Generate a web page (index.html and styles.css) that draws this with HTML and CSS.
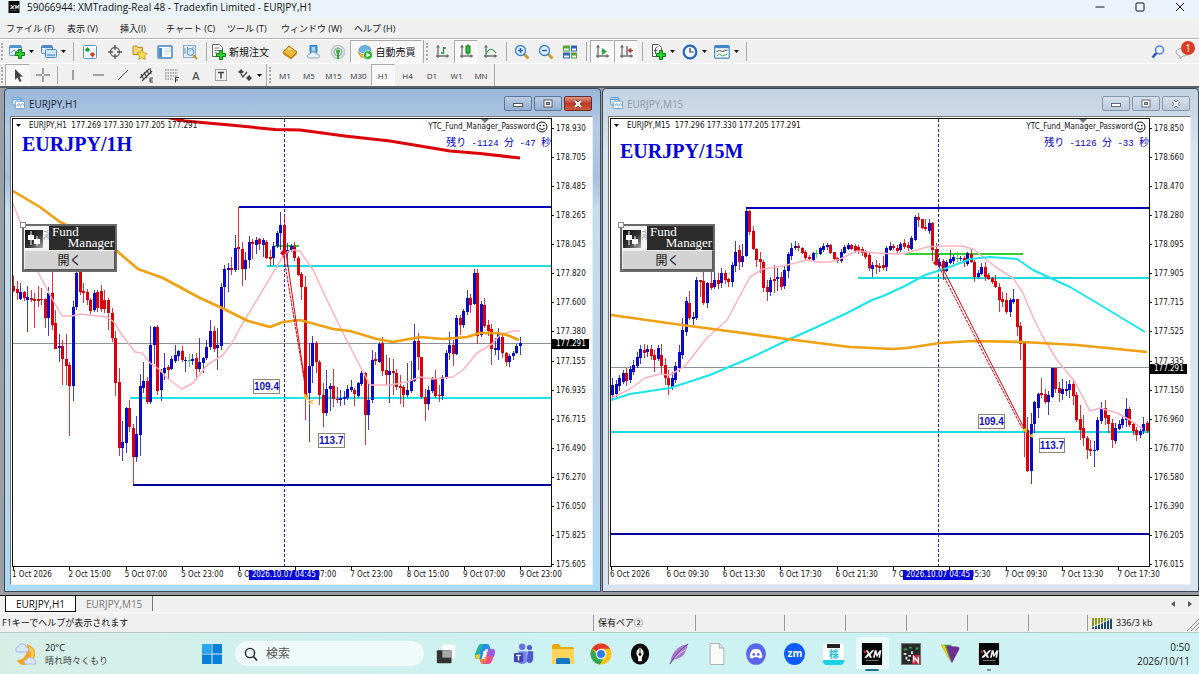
FILE: index.html
```html
<!DOCTYPE html>
<html lang="ja">
<head>
<meta charset="utf-8">
<title>59066944: XMTrading-Real 48 - Tradexfin Limited - EURJPY,H1</title>
<link rel="stylesheet" href="styles.css">
</head>
<body>
<svg class="defs" aria-hidden="true">
  <symbol id="caret" viewBox="0 0 5 3"><path d="M0 0h5L2.500 3z" fill="#111"/></symbol>
  <symbol id="axes" viewBox="0 0 16 16"><path d="M4 2v12M2 12h12" stroke="#6b706b" stroke-width="1.300" fill="none"/><path d="M4 0.500l-2 3h4zM15.500 12l-3-2v4z" fill="#6b706b"/></symbol>
  <symbol id="plus" viewBox="0 0 10 10"><path d="M3.500 .500h3v3h3v3h-3v3h-3v-3h-3v-3h3z" fill="#2fd02f" stroke="#0a7d12"/></symbol>
  <symbol id="chartwin" viewBox="0 0 14 14"><rect x=".5" y=".5" width="9" height="8" rx="1" fill="#e3f0fb" stroke="#5d9bd3"/><path d="M.5 2.500h9" stroke="#5d9bd3" stroke-width="1.500"/><rect x="3.500" y="4.500" width="10" height="8" rx="1" fill="#fff" stroke="#5d9bd3"/><path d="M5 10l2-3 2 3 2-3 2 2" stroke="#5d9bd3" fill="none"/></symbol>
  <symbol id="xm" viewBox="0 0 22 24"><rect width="22" height="24" fill="#050505"/><path d="M4 8l2.500 0 1.500 3 3-3h2.500l-4 4.500 1.500 3.500h-2.500l-1-2-2 2h-3l4-4.500z" fill="#eee"/><path d="M2 7l3 4-3 0z" fill="#d22"/><path d="M12 16l2-8h2l.8 4 2.500-4h2l-1.500 8h-1.800l.8-4-2 3h-1l-1-3-.8 4z" fill="#eee"/><path d="M4 19h14" stroke="#888"/></symbol>
  <symbol id="smile" viewBox="0 0 12 12"><circle cx="6" cy="6" r="5" fill="none" stroke="#111"/><circle cx="4.200" cy="4.600" r=".8"/><circle cx="7.800" cy="4.600" r=".8"/><path d="M3.200 7.200q2.800 3 5.600 0" fill="none" stroke="#111"/></symbol>
  <symbol id="candles" viewBox="0 0 18 18"><defs><linearGradient id="cg" x2="1" y2="1"><stop stop-color="#111"/><stop offset=".55" stop-color="#333"/><stop offset="1" stop-color="#aaa"/></linearGradient></defs><rect width="18" height="18" fill="url(#cg)"/><path d="M6 1v14M12 6v10" stroke="#fff"/><path d="M3 5h6v5h-6zM9 9h6v5h-6z" fill="#fff"/></symbol>
</svg>

<header class="titlebar">
  <svg class="app-icon"><use href="#xm"/></svg>
  <h1 class="app-title">59066944: XMTrading-Real 48 - Tradexfin Limited - EURJPY,H1</h1>
  <div class="win-controls">
    <button aria-label="最小化"><svg viewBox="0 0 10 10"><path d="M.5 5h9" stroke="#111"/></svg></button>
    <button aria-label="最大化"><svg viewBox="0 0 10 10"><rect x="1" y="1" width="8" height="8" rx="1" fill="none" stroke="#111"/></svg></button>
    <button aria-label="閉じる"><svg viewBox="0 0 10 10"><path d="M1 1l8 8M9 1l-8 8" stroke="#111"/></svg></button>
  </div>
</header>

<nav class="menubar">
  <button class="m-file">ファイル (F)</button><button class="m-view">表示 (V)</button><button class="m-insert">挿入(I)</button><button class="m-chart">チャート (C)</button><button class="m-tool">ツール (T)</button><button class="m-window">ウィンドウ (W)</button><button>ヘルプ (H)</button>
</nav>

<div class="toolbar main-tools">
  <span class="grip"></span>
  <button class="tool drop" aria-label="新規チャート"><svg class="ico" viewBox="0 0 16 16"><rect x=".5" y="1.500" width="12" height="10" rx="1" fill="#e6f2fc" stroke="#4f93cf"/><path d="M1 3h11" stroke="#4f93cf" stroke-width="2"/><path d="M2 9l3-3 2 2 3-3" stroke="#5d9bd3" fill="none"/><use href="#plus" x="6" y="5" width="10" height="10"/></svg><svg class="caret"><use href="#caret"/></svg></button>
  <button class="tool drop" aria-label="組表示"><svg class="ico" viewBox="0 0 16 16"><rect x=".5" y="1.500" width="11" height="8" rx="1" fill="#dcebf8" stroke="#4f86bf"/><path d="M1 3h10" stroke="#4f86bf" stroke-width="2"/><rect x="4.500" y="5.500" width="11" height="8" rx="1" fill="#cfe3f6" stroke="#4f86bf"/><path d="M6 11h8" stroke="#7fb0dd" stroke-width="2"/></svg><svg class="caret"><use href="#caret"/></svg></button>
  <span class="sep"></span>
  <button class="tool" aria-label="気配値"><svg class="ico" viewBox="0 0 16 16"><rect x="1.500" y="1.500" width="13" height="13" rx="1" fill="#f4faff" stroke="#5793cb"/><path d="M5.500 3l3 3.500h-1.500v1h-3v-1h-1.500z" fill="#1d9a2d"/><path d="M10.500 13.500l-3-3.500h1.500v-1.500h3v1.500h1.500z" fill="#e03c1c"/></svg></button>
  <button class="tool" aria-label="データウィンドウ"><svg class="ico" viewBox="0 0 16 16"><circle cx="8" cy="8" r="4.500" fill="none" stroke="#666" stroke-width="1.300"/><path d="M8 1v5M8 10v5M1 8h5M10 8h5" stroke="#555" stroke-width="1.300"/></svg></button>
  <button class="tool" aria-label="ナビゲーター"><svg class="ico" viewBox="0 0 16 16"><path d="M1 3q0-1 1-1h3l1 1.500h4.500v7h-9.500z" fill="#f7d675" stroke="#b98b1d"/><path d="M10 5.500l1.600 3.300 3.600.5-2.600 2.500.6 3.600-3.200-1.700-3.200 1.700.6-3.600-2.600-2.500 3.600-.5z" fill="#ffe14a" stroke="#b98b1d" stroke-width=".8"/></svg></button>
  <button class="tool" aria-label="ターミナル"><svg class="ico" viewBox="0 0 16 16"><rect x="1" y="2" width="14" height="12" rx="1" fill="#fff" stroke="#3e7ec4" stroke-width="1.400"/><path d="M2 4h3v9h-3z" fill="#4a88cb"/><path d="M7 5h7M7 7.500h7M7 10h5" stroke="#b9d4ee"/></svg></button>
  <button class="tool" aria-label="ストラテジーテスター"><svg class="ico" viewBox="0 0 16 16"><rect x="1.500" y="1.500" width="12" height="12" fill="#e4eef8" stroke="#8aa9c8"/><path d="M3 4v6M5.500 3v6M8 4v4M11 3v5" stroke="#678db3"/><circle cx="8.500" cy="8" r="3.500" fill="#cfe4f7aa" stroke="#6397c8"/><path d="M11 11l4 4" stroke="#c99a2b" stroke-width="2"/></svg></button>
  <span class="sep"></span>
  <button class="tool wide"><svg class="ico" viewBox="0 0 16 16"><path d="M2.500.5h7l3 3v9h-10z" fill="#fff" stroke="#666"/><path d="M4.500 4h5M4.500 6.500h6M4.500 9h3" stroke="#777"/><use href="#plus" x="6" y="6" width="10" height="10"/></svg><span>新規注文</span></button>
  <button class="tool snug" aria-label="メタエディター"><svg class="ico" viewBox="0 0 16 16"><path d="M1 8l6-6 8 6-6 6z" fill="#f0b83a" stroke="#a9700f"/><path d="M1 8v2l8 5.500 6-5.500v-2l-6 6z" fill="#c98716"/><path d="M5 6l2.500-2.500 3 2" fill="#ffe39a"/></svg></button>
  <button class="tool snug" aria-label="VPS"><svg class="ico" viewBox="0 0 16 16"><path d="M4 1.500h7v7h-7z" fill="#56a7e8" stroke="#2d78bd"/><path d="M6 4h3M6 6h3" stroke="#fff"/><path d="M3 14q-2.500-.5-1.500-3 1-1.500 2.500-1 1-2.500 4-2 2.500.5 2.500 2 3 0 3 2 0 2-2 2z" fill="#e8f3fc" stroke="#7fa8cd"/></svg></button>
  <button class="tool snug" aria-label="シグナル"><svg class="ico" viewBox="0 0 16 16"><circle cx="8" cy="8" r="6.500" fill="none" stroke="#b9c9c9" stroke-width="1.500"/><circle cx="8" cy="8" r="3.800" fill="none" stroke="#8db8a4" stroke-width="1.600"/><circle cx="8" cy="7.500" r="2" fill="#39a53e"/><path d="M8 8v7" stroke="#39a53e" stroke-width="2"/></svg></button>
  <button class="tool auto pressed"><svg class="ico" viewBox="0 0 16 16"><path d="M1 8q7 6 14 0l-3 5q-4 2-8 0z" fill="#f0c02c" stroke="#b48310" stroke-width=".7"/><path d="M2 7q0-5 6-5.500 6 .5 6 5.500-6 4-12 0z" fill="#67b5e8" stroke="#327fb8" stroke-width=".7"/><circle cx="11" cy="11" r="4.500" fill="#2fae34" stroke="#fff" stroke-width=".6"/><path d="M9.500 8.500l4 2.500-4 2.500z" fill="#fff"/></svg><span>自動売買</span></button>
  <span class="sep tight"></span><span class="grip"></span>
  <button class="tool snug" aria-label="バーチャート"><svg class="ico" viewBox="0 0 16 16"><use href="#axes"/><path d="M9.500 3v7M9.500 4h2.500M7 9h2.500" stroke="#2d8c3c" stroke-width="1.300"/></svg></button>
  <button class="tool snug pressed" aria-label="ローソク足"><svg class="ico" viewBox="0 0 16 16"><use href="#axes"/><path d="M10 0v11" stroke="#0e7a1b"/><rect x="8" y="2" width="4" height="7" fill="#2fbf3a" stroke="#0e7a1b"/></svg></button>
  <button class="tool snug" aria-label="ラインチャート"><svg class="ico" viewBox="0 0 16 16"><use href="#axes"/><path d="M4 10q4-9 10-1" fill="none" stroke="#3c9b4a" stroke-width="1.200"/></svg></button>
  <span class="sep"></span>
  <button class="tool snug" aria-label="ズームイン"><svg class="ico" viewBox="0 0 16 16"><path d="M9.500 9.500l5 5" stroke="#c9a02b" stroke-width="3"/><circle cx="6.500" cy="6.500" r="5" fill="#dff0fd" stroke="#3b7fd1" stroke-width="1.300"/><path d="M6.500 4v5M4 6.500h5" stroke="#1f63bb" stroke-width="1.500"/></svg></button>
  <button class="tool snug" aria-label="ズームアウト"><svg class="ico" viewBox="0 0 16 16"><path d="M9.500 9.500l5 5" stroke="#c9a02b" stroke-width="3"/><circle cx="6.500" cy="6.500" r="5" fill="#dff0fd" stroke="#3b7fd1" stroke-width="1.300"/><path d="M4 6.500h5" stroke="#1f63bb" stroke-width="1.500"/></svg></button>
  <button class="tool snug" aria-label="整列"><svg class="ico" viewBox="0 0 16 16"><path d="M1 1.500h7v6h-7zM9 8.500h6v6h-6z" fill="#54a62a"/><path d="M9 1.500h6v6h-6zM1 8.500h7v6h-7z" fill="#2f65b5"/><path d="M2 4.500h5v2h-5zM10 4.500h4v2h-4zM2 11.500h5v2h-5zM10 11.500h4v2h-4z" fill="#eaf4ff"/></svg></button>
  <span class="sep"></span>
  <button class="tool snug pressed" aria-label="自動スクロール"><svg class="ico" viewBox="0 0 16 16"><use href="#axes"/><path d="M8 4l5 3.500-5 3.500z" fill="#2aa13a"/></svg></button>
  <button class="tool snug pressed" aria-label="チャートシフト"><svg class="ico" viewBox="0 0 16 16"><use href="#axes"/><path d="M9 2v9" stroke="#555" stroke-width="1.300"/><path d="M10 6.500l3-2v4zM13 6.500h2" fill="#c6322a" stroke="#c6322a"/></svg></button>
  <span class="sep"></span>
  <button class="tool drop" aria-label="インディケーター"><svg class="ico" viewBox="0 0 16 16"><path d="M2.500.5h6l3 3v9h-9z" fill="#fff" stroke="#555"/><path d="M7.500 3q-2 0-2 2v5M4 6.500h3.500" stroke="#555" fill="none"/><use href="#plus" x="6" y="6" width="10" height="10"/></svg><svg class="caret"><use href="#caret"/></svg></button>
  <button class="tool drop" aria-label="時間足"><svg class="ico" viewBox="0 0 16 16"><circle cx="8" cy="8" r="6.300" fill="#f2f8fe" stroke="#1f66bf" stroke-width="2.200"/><path d="M8 4v4h3.500" fill="none" stroke="#335" stroke-width="1.200"/></svg><svg class="caret"><use href="#caret"/></svg></button>
  <button class="tool drop" aria-label="定型チャート"><svg class="ico" viewBox="0 0 16 16"><rect x=".7" y="1.700" width="14.500" height="12.500" rx="1" fill="#fff" stroke="#4384c6" stroke-width="1.200"/><path d="M1 3h14" stroke="#4384c6" stroke-width="2.500"/><path d="M2.500 7.500l3-1 3 1 5-1.500" stroke="#444" fill="none"/><path d="M2.500 12l3-2 3 2 5-2" stroke="#3ba04a" fill="none"/></svg><svg class="caret"><use href="#caret"/></svg></button>
  <span class="sep"></span>
  <div class="tool-right">
    <button class="tool snug" aria-label="検索"><svg class="ico" viewBox="0 0 16 16"><circle cx="9.500" cy="6" r="4" fill="#eef5ff" stroke="#4a7fd6" stroke-width="1.500"/><path d="M6.500 9l-4 4.500" stroke="#2355b8" stroke-width="2.500"/></svg></button>
    <button class="tool notice" aria-label="通知"><svg class="ico" viewBox="0 0 16 16"><path d="M8 4q6 0 6 4t-6 4l-3 3v-3q-4-1-4-4t7-4z" fill="#eceef2" stroke="#a3a8b0"/></svg><span class="badge">1</span></button>
  </div>
</div>

<div class="toolbar line-tools">
  <span class="grip"></span>
  <button class="tool pressed" aria-label="カーソル"><svg class="ico" viewBox="0 0 16 16"><path d="M5 2v11l2.500-2.500 2 4.500 2-1-2-4.300h3.500z" fill="#444"/></svg></button>
  <button class="tool" aria-label="クロスヘア"><svg class="ico" viewBox="0 0 16 16"><path d="M8 1v6M8 9v6M1 8h6M9 8h6" stroke="#555"/></svg></button>
  <span class="sep narrow"></span>
  <button class="tool" aria-label="垂直線"><svg class="ico" viewBox="0 0 16 16"><path d="M8 3v10" stroke="#555"/></svg></button>
  <button class="tool" aria-label="水平線"><svg class="ico" viewBox="0 0 16 16"><path d="M3 8h11" stroke="#555"/></svg></button>
  <button class="tool" aria-label="トレンドライン"><svg class="ico" viewBox="0 0 16 16"><path d="M3 13l10-10" stroke="#555"/></svg></button>
  <button class="tool snug" aria-label="チャネル"><svg class="ico" viewBox="0 0 16 16"><path d="M1 11l9-9M3 14l10-10M2 7l3 6M5 5l3 6M8 3l2 5M11 1l1 6" stroke="#444" stroke-width="1.200"/><path d="M14 11h-3v4h3M11 13h2.500" stroke="#333" fill="none"/></svg></button>
  <button class="tool" aria-label="フィボナッチ"><svg class="ico" viewBox="0 0 16 16"><path d="M1 3h13M1 6h13M1 9h13M1 12h8" stroke="#666" stroke-dasharray="1.500 1"/><path d="M11.500 15.500v-5h3.500M11.500 13h2.500" stroke="#333" fill="none"/></svg></button>
  <button class="tool snug letter">A</button>
  <button class="tool" aria-label="ラベル"><svg class="ico" viewBox="0 0 16 16"><rect x="2.500" y="2.500" width="11" height="11" fill="none" stroke="#555" stroke-dasharray="1 1"/><path d="M5 5.500h6M8 5.500v6" stroke="#444" stroke-width="1.500"/></svg></button>
  <button class="tool drop" aria-label="矢印"><svg class="ico" viewBox="0 0 16 16"><path d="M1 5l3-3 3 3-3 2zM9 11l3-3 3 3-3 3z" fill="#444"/><path d="M4 7l2 3 4-5" stroke="#444" fill="none" stroke-width="1.300"/></svg><svg class="caret"><use href="#caret"/></svg></button>
  <span class="sep tight"></span><span class="grip"></span>
  <button class="tool period">M1</button><button class="tool period">M5</button><button class="tool period more">M15</button><button class="tool period more">M30</button><button class="tool period pressed">H1</button><button class="tool period more">H4</button><button class="tool period">D1</button><button class="tool period more">W1</button><button class="tool period">MN</button>
  <span class="sep tight"></span>
</div>

<main class="mdi">
  <section class="chart-win active">
    <header class="chart-title">
      <svg class="cicon"><use href="#chartwin"/></svg><h2>EURJPY,H1</h2>
      <div class="cbtns">
        <button aria-label="最小化"><svg viewBox="0 0 12 10"><rect x="1.500" y="4.500" width="9" height="3" fill="#fff" stroke="#555"/></svg></button>
        <button aria-label="最大化"><svg viewBox="0 0 12 10"><rect x="2" y="1" width="8" height="7" fill="#fff" stroke="#556"/><rect x="4.500" y="3.500" width="3" height="2" fill="#9ab" stroke="#556"/></svg></button>
        <button class="close" aria-label="閉じる"><svg viewBox="0 0 12 10"><path d="M3 2l6 6M9 2l-6 6" stroke="#6b2a22" stroke-width="3.400"/><path d="M3 2l6 6M9 2l-6 6" stroke="#fff" stroke-width="2"/></svg></button>
      </div>
    </header>
    <div class="client">
      <div class="plot">
        <svg class="canvas" id="h1" viewBox="13 119 538 447" preserveAspectRatio="none"></svg>
        <div class="shift"></div>
        <div class="plot-head">
          <div class="head-left">
            <p class="quote"><svg class="caret"><use href="#caret"/></svg>EURJPY,H1&nbsp; 177.269 177.330 177.205 177.291</p>
            <p class="pair">EURJPY/1H</p>
          </div>
          <div class="head-right">
            <p class="ea">YTC_Fund_Manager_Password<svg class="smile"><use href="#smile"/></svg></p>
            <p class="remain"><span>残り</span> -1124 <span>分</span> -47 <span>秒</span></p>
          </div>
        </div>
        <div class="fund">
          <div class="fund-head"><svg class="fund-logo"><use href="#candles"/></svg><span class="ytc">YTC</span><span class="fund-name"><span>Fund</span><span class="mgr">Manager</span></span></div>
          <button>開く</button>
        </div>
        <span class="pip h1-a">109.4</span><span class="pip h1-b">113.7</span>
      </div>
      <div class="prices">
        <span>178.930</span><span>178.705</span><span>178.485</span><span>178.265</span><span>178.045</span><span>177.820</span><span>177.600</span><span>177.380</span><span>177.155</span><span>176.935</span><span>176.715</span><span>176.490</span><span>176.270</span><span>176.050</span><span>175.825</span><span>175.605</span>
        <b class="now now-h1">177.291</b>
      </div>
      <div class="times">
        <span>1 Oct 2026</span><span>2 Oct 15:00</span><span>5 Oct 07:00</span><span>5 Oct 23:00</span><span>6 Oct 15:00</span><span>7 Oct 07:00</span><span>7 Oct 23:00</span><span>8 Oct 15:00</span><span>9 Oct 07:00</span><span>9 Oct 23:00</span>
        <b class="mark mark-h1">2026.10.07 04:45</b>
      </div>
    </div>
  </section>

  <section class="chart-win">
    <header class="chart-title">
      <svg class="cicon"><use href="#chartwin"/></svg><h2>EURJPY,M15</h2>
      <div class="cbtns">
        <button aria-label="最小化"><svg viewBox="0 0 12 10"><rect x="1.500" y="4.500" width="9" height="3" fill="#fff" stroke="#667"/></svg></button>
        <button aria-label="最大化"><svg viewBox="0 0 12 10"><rect x="2" y="1" width="8" height="7" fill="#fff" stroke="#667"/><rect x="4.500" y="3.500" width="3" height="2" fill="#9ab" stroke="#667"/></svg></button>
        <button aria-label="閉じる"><svg viewBox="0 0 12 10"><path d="M3 2l6 6M9 2l-6 6" stroke="#667" stroke-width="3.400"/><path d="M3 2l6 6M9 2l-6 6" stroke="#fff" stroke-width="1.800"/></svg></button>
      </div>
    </header>
    <div class="client">
      <div class="plot">
        <svg class="canvas" id="m15" viewBox="611 119 538 447" preserveAspectRatio="none"></svg>
        <div class="shift"></div>
        <div class="plot-head">
          <div class="head-left">
            <p class="quote"><svg class="caret"><use href="#caret"/></svg>EURJPY,M15&nbsp; 177.296 177.330 177.205 177.291</p>
            <p class="pair low">EURJPY/15M</p>
          </div>
          <div class="head-right">
            <p class="ea">YTC_Fund_Manager_Password<svg class="smile"><use href="#smile"/></svg></p>
            <p class="remain"><span>残り</span> -1126 <span>分</span> -33 <span>秒</span></p>
          </div>
        </div>
        <div class="fund">
          <div class="fund-head"><svg class="fund-logo"><use href="#candles"/></svg><span class="ytc">YTC</span><span class="fund-name"><span>Fund</span><span class="mgr">Manager</span></span></div>
          <button>開く</button>
        </div>
        <span class="pip m15-a">109.4</span><span class="pip m15-b">113.7</span>
      </div>
      <div class="prices">
        <span>178.850</span><span>178.660</span><span>178.470</span><span>178.280</span><span>178.095</span><span>177.905</span><span>177.715</span><span>177.525</span><span>177.335</span><span>177.150</span><span>176.960</span><span>176.770</span><span>176.580</span><span>176.390</span><span>176.205</span><span>176.015</span>
        <b class="now now-m15">177.291</b>
      </div>
      <div class="times">
        <span>6 Oct 2026</span><span>6 Oct 09:30</span><span>6 Oct 13:30</span><span>6 Oct 17:30</span><span>6 Oct 21:30</span><span>7 Oct 01:30</span><span>7 Oct 05:30</span><span>7 Oct 09:30</span><span>7 Oct 13:30</span><span>7 Oct 17:30</span>
        <b class="mark mark-m15">2026.10.07 04:45</b>
      </div>
    </div>
  </section>
</main>

<div class="tabs">
  <button class="tab on">EURJPY,H1</button><button class="tab">EURJPY,M15</button>
  <div class="tab-arrows"><button aria-label="左へ"><svg viewBox="0 0 4 6"><path d="M4 0v6l-4-3z" fill="#555"/></svg></button><button aria-label="右へ"><svg viewBox="0 0 4 6"><path d="M0 0v6l4-3z" fill="#555"/></svg></button></div>
</div>

<footer class="status">
  <span class="cell help">F1キーでヘルプが表示されます</span><span class="cell profile">保有ペア②</span><span class="cell c-a"></span><span class="cell c-b"></span><span class="cell c-b"></span><span class="cell c-b"></span><span class="cell c-b"></span><span class="cell c-c"></span>
  <span class="cell conn"><svg class="bars" viewBox="0 0 20 12"><path d="M1 1v10M4 1v10M7 1v10M10 1v10M13 1v10M16 1v10M19 1v10" stroke="#8b9a1c" stroke-width="2"/><path d="M1 9v3M4 8v4M7 7v5M10 6v6M13 4v8M16 3v9M19 1v11" stroke="#1d4d6e" stroke-width="2"/><path d="M0 10l10-4 10-5" stroke="#eee" fill="none"/></svg>336/3 kb</span>
  <svg class="resize" viewBox="0 0 12 12"><path d="M0 12l12-12M4 12l8-8M8 12l4-4" stroke="#888"/></svg>
</footer>

<div class="taskbar">
  <div class="weather">
    <svg class="w-icon" viewBox="0 0 22 24"><path d="M12 2q9 3 8 12-3 9-12 9-5-1-6-5 11 0 10-16z" fill="#f5a524"/><path d="M14 5q6 6 2 13" stroke="#ffd05c" stroke-width="2.500" fill="none"/><path d="M2 10q-3-4 1-5 1-4 5-3 3 0 3 3 4 1 2 5z" fill="#d8e6f8" stroke="#8faede" stroke-width=".8"/><path d="M10 22q-2-4 1-4 2-4 6-2 4 1 4 6z" fill="#dce6fa" stroke="#9fb2dc" stroke-width=".8"/></svg>
    <p><span>20°C</span><span class="cond">晴れ時々くもり</span></p>
  </div>
  <button class="start" aria-label="スタート"><svg viewBox="0 0 20 20"><path d="M0 0h9.500v9.500h-9.500zM10.500 0h9.500v9.500h-9.500zM0 10.500h9.500v9.500h-9.500zM10.500 10.500h9.500v9.500h-9.500z" fill="#0c80d8"/><path d="M0 0h9.500v9.500h-9.500z" fill="#2aa4ec"/></svg></button>
  <label class="search"><svg viewBox="0 0 14 14"><circle cx="6" cy="6" r="4.600" fill="none" stroke="#222" stroke-width="1.400"/><path d="M9.500 9.500l3.500 4" stroke="#222" stroke-width="1.600"/></svg><input type="text" placeholder="検索" aria-label="検索"></label>
  <div class="apps">
    <button aria-label="タスクビュー"><svg viewBox="0 0 22 24"><rect x="7" y="2" width="14" height="14" rx="1" fill="#fff"/><rect x="1" y="8" width="16" height="14" rx="1" fill="#333"/><path d="M7 8h10v8h-10z" fill="#a9a9a9"/></svg></button>
    <button aria-label="Copilot"><svg viewBox="0 0 22 22"><path d="M7 1h6q2 0 2.500 2l1 3h-5l-4 10h-4q-3 0-2.500-4l3-8q1-3 3-3z" fill="#1e8fe6"/><path d="M1 11l3-7q1-3 4-3h2q-2 2-3 5l-3 10q-4 0-3-5z" fill="#27b59e"/><path d="M1.500 12l5-1-1 5h-2q-2.500-1-2-4z" fill="#f0c92e"/><path d="M15 21h-6q-2 0-2.500-2l-1-3h5l4-10h4q3 0 2.500 4l-3 8q-1 3-3 3z" fill="#e4508e"/><path d="M5.500 16h5l2-5q2 8-4.500 9.500-1.500-1-2.500-4.500z" fill="#f58a3a"/><path d="M14.500 6h4q3 0 2.500 4l-1 3q-5 1-7-3z" fill="#9a5be0"/><path d="M9.500 8h4l-2 6h-3z" fill="#fff"/></svg></button>
    <button aria-label="Teams"><svg viewBox="0 0 22 24"><circle cx="9" cy="4" r="3.500" fill="#6670e0"/><circle cx="17" cy="5" r="2.800" fill="#5059c9"/><path d="M5 9h9v9q0 5-5 5t-5-5z" fill="#7b83eb"/><path d="M15 9h6v8q0 4-4 5-3 0-3-2z" fill="#5059c9"/><rect y="11" width="10" height="10" rx="1.500" fill="#3d46b5"/><path d="M2.500 13.500h5M5 13.500v5.500" stroke="#fff" stroke-width="1.500"/></svg></button>
    <button aria-label="エクスプローラー"><svg viewBox="0 0 22 22"><path d="M0 3q0-2 2-2h5l2 3h11q2 0 2 2v13q0 2-2 2h-18q-2 0-2-2z" fill="#eda60f"/><path d="M0 6h22v13q0 2-2 2h-18q-2 0-2-2z" fill="#ffd55c"/><path d="M4 21v-4q0-2 2-2h10q2 0 2 2v4z" fill="#1578c7"/></svg></button>
    <button aria-label="Chrome"><svg viewBox="0 0 22 22"><circle cx="11" cy="11" r="10.500" fill="#fbc116"/><path d="M1.900 5.800a10.500 10.500 0 0 1 18.200 0h-9.100v5z" fill="#e33b2e"/><path d="M1.900 5.800a10.500 10.500 0 0 0 8.100 15.700l4.500-8.500-7-1z" fill="#2da94f"/><circle cx="11" cy="11" r="5.200" fill="#fff"/><circle cx="11" cy="11" r="4" fill="#2f7de9"/></svg></button>
    <button aria-label="ペン"><svg viewBox="0 0 22 24"><ellipse cx="11" cy="12" rx="10" ry="11.500" fill="#0a0a0a"/><path d="M11 5q6 4 3 9l-1 2v4h-4v-4l-1-2q-3-5 3-9z" fill="#fff"/><path d="M11 6v6" stroke="#111"/><circle cx="11" cy="12.500" r="1.500"/></svg></button>
    <button aria-label="フェザー"><svg viewBox="0 0 22 24"><path d="M21 1q-14 2-18 14l-2 8 5-5q11-2 13-11z" fill="#a77ac9"/><path d="M21 1q-12 8-20 22" stroke="#6d3f95" fill="none"/><path d="M19 7q-7 3-12 9" stroke="#e7d3f5" fill="none"/></svg></button>
    <button aria-label="ファイル"><svg viewBox="0 0 22 24"><path d="M3.500.5h10l5 5v18h-15z" fill="#fafafa" stroke="#aaa"/><path d="M13.500.5v5h5" fill="#ddd" stroke="#aaa"/></svg></button>
    <button aria-label="Discord"><svg viewBox="0 0 22 24"><ellipse cx="11" cy="12" rx="10.800" ry="11.800" fill="#5b66ee"/><path d="M6.500 7.500q4.500-1.800 9 0 2.500 4 2.500 8-2 1.700-3.500 1.500l-1-1.500h-5l-1 1.500q-1.500.2-3.500-1.500 0-4 2.500-8z" fill="#fff"/><circle cx="8.500" cy="12.500" r="1.500" fill="#5b66ee"/><circle cx="13.500" cy="12.500" r="1.500" fill="#5b66ee"/></svg></button>
    <button aria-label="Zoom"><span class="zm">zm</span></button>
    <button aria-label="株"><span class="kabu"><i></i><b>株</b></span></button>
    <button class="current" aria-label="XM"><svg><use href="#xm"/></svg></button>
    <button aria-label="ツール"><svg viewBox="0 0 22 24"><rect x=".5" y=".5" width="21" height="23" fill="#272b29" stroke="#777"/><path d="M3 7h4M9 5h3M16 6h3" stroke="#3c9b4e" stroke-width="2"/><path d="M3 12h3M8 14h3M7 19h3M12 9v3M6 15v3" stroke="#ddd" stroke-width="2"/><path d="M12 13h9v10h-9z" fill="#c3263c"/><path d="M14 21v-6l5 6v-6" stroke="#fff" fill="none" stroke-width="1.500"/></svg></button>
    <button aria-label="V"><svg viewBox="0 0 22 24"><path d="M1 2l12 0-3 5 2 14z" fill="#4a9a3d"/><path d="M1 2l4 0 7 19z" fill="#f0c51e"/><path d="M7 3l13 1q2 1 1 3l-8 15z" fill="#6e2f92"/></svg></button>
    <button class="open" aria-label="XM 2"><svg><use href="#xm"/></svg></button>
  </div>
  <p class="clock"><span>0:50</span><span>2026/10/11</span></p>
</div>
<script src="charts.js"></script>
</body>
</html>
```
FILE: styles.css
```css
* { box-sizing: border-box; }
body { margin: 0; height: 100vh; display: flex; flex-direction: column; overflow: hidden; background: #f0f0f0; color: #111; font-family: "Open Sans", "Noto Sans CJK JP", sans-serif; font-size: 10px; }
p, h1, h2 { margin: 0; font-weight: 400; }
button { margin: 0; padding: 0; border: 0; background: none; font: inherit; color: inherit; }
svg { display: block; }
.defs { position: absolute; width: 0; height: 0; }

.titlebar { flex: 0 0 19px; display: flex; align-items: center; padding: 0 14px 5px 7px; background: #eaf4f8; gap: 6px; }
.app-icon { width: 14px; height: 12px; }
.app-title { flex: 1; font-size: 10px; line-height: 14px; white-space: nowrap; }
.win-controls { display: flex; gap: 30px; }
.win-controls svg { width: 10px; height: 10px; }

.menubar { flex: 0 0 20px; display: flex; align-items: center; padding-left: 6px; border-bottom: 1px solid #b4b4b4; font-size: 9px; white-space: nowrap; }
.menubar button { text-align: left; }
.m-file { width: 61px; }
.m-view { width: 53px; }
.m-insert { width: 46px; }
.m-chart { width: 61px; }
.m-tool { width: 54px; }
.m-window { width: 73px; }

.toolbar { flex: 0 0 24px; display: flex; align-items: stretch; border-top: 1px solid #fff; white-space: nowrap; }
.line-tools { flex-basis: 23px; }
.grip { width: 4px; margin: 3px 0 3px 1px; border-left: 2px dotted #aaa; }
.sep { width: 1px; margin: 2px 3px 2px 4px; background: #aaa; }
.sep.tight { margin: 0 1px; }
.sep.narrow { margin: 2px; }
.tool { width: 25px; display: flex; align-items: center; justify-content: center; }
.tool.snug { width: 24px; }
.tool.drop { width: 32px; gap: 4px; }
.tool.wide { width: 68px; gap: 3px; justify-content: flex-start; }
.tool.auto { width: 72px; gap: 3px; }
.tool.period { width: 24px; font-size: 8px; color: #333; }
.tool.period.more { width: 25px; }
.tool.letter { font-size: 11px; font-weight: 600; color: #555; }
.pressed { background: #f8f8f8; border: 1px solid #aaa; border-right-color: #fff; border-bottom-color: #fff; }
.ico { width: 16px; height: 16px; flex: none; }
.caret { width: 5px; height: 3px; flex: none; }
.tool-right { margin-left: auto; display: flex; padding-right: 4px; }
.notice { position: relative; }
.badge { position: absolute; right: 0; top: 1px; width: 14px; height: 14px; border-radius: 50%; background: #dd3a22; color: #fff; font-size: 10px; line-height: 14px; text-align: center; }

.mdi { flex: 1; min-height: 0; display: grid; grid-template-columns: 1fr 1fr; gap: 1px; padding: 2px 0 3px 4px; background: linear-gradient(#596068 2px, #9a9fa5 2px); }
.chart-win { display: flex; flex-direction: column; min-height: 0; padding: 0 7px 6px 5px; border: 1px solid #3c4a58; border-radius: 4px 4px 0 0; background: linear-gradient(#c3d2e2, #d8e3ef 60px); }
.chart-win.active { background: linear-gradient(#9ab6d8, #b4cbe6 40px, #a5c0de 90px, #c5dcef 120px, #b9d3ec 400px, #a8dcf5); }
.chart-title { flex: 0 0 27px; display: flex; align-items: center; gap: 4px; padding: 2px 0 0 2px; }
.cicon { width: 13px; height: 13px; }
.chart-title h2 { flex: 1; font-size: 10px; color: #8e98a3; }
.active .chart-title h2 { color: #1c2733; }
.cbtns { display: flex; gap: 2px; padding-right: 1px; }
.cbtns button { width: 28px; height: 15px; display: grid; place-items: center; border: 1px solid #8495a8; border-radius: 2px; background: linear-gradient(#d5e0eb, #bccbdc); }
.active .cbtns button { border-color: #5e7691; background: linear-gradient(#b9cde4, #93afd0); }
.active .cbtns .close { border-color: #6e2a22; background: linear-gradient(#dd9a8d, #bf3a26 50%, #cb5b40); }
.cbtns svg { width: 12px; height: 10px; }
.client { flex: 1; min-height: 0; display: grid; grid-template-columns: 1fr 40px; grid-template-rows: 1fr 17px; padding: 1px 0 0 1px; border: 1px solid #777; border-right-color: #eee; border-bottom-color: #eee; background: #fff; font-family: "DejaVu Sans Condensed", "Open Sans", sans-serif; font-size: 8px; color: #111; }
.plot { position: relative; min-height: 0; border: 1px solid #111; }
.canvas { position: absolute; inset: 0; width: 100%; height: 100%; }
.shift { position: absolute; left: 87%; top: 0; border: 4px solid transparent; border-top-color: #6d7885; }
.plot-head { position: relative; display: flex; justify-content: space-between; white-space: nowrap; }
.quote { display: flex; align-items: center; gap: 8px; height: 13px; padding-left: 3px; line-height: 13px; }
.pair { padding-left: 9px; font-family: "Liberation Serif", serif; font-weight: 700; font-size: 20px; line-height: 24px; color: #0000e0; }
.pair.low { padding-top: 7px; }
.head-right { text-align: right; }
.ea { display: flex; align-items: center; justify-content: flex-end; gap: 1px; height: 15px; padding-right: 3px; }
.smile { width: 12px; height: 12px; }
.remain { font-family: "Liberation Mono", monospace; font-size: 9px; line-height: 16px; color: #0000d0; }
.remain span { font-family: "Noto Sans CJK JP", sans-serif; font-size: 10px; }
.fund { position: absolute; left: 9px; top: 105px; width: 95px; border: 2px solid #6a6a6a; background: #d3d3d3; }
.fund::before { content: ""; position: absolute; left: -4px; top: -4px; width: 4px; height: 4px; border: 1px solid #888; background: #fff; }
.fund-head { display: flex; height: 24px; background: #f4f4f4; }
.fund-logo { flex: none; width: 18px; height: 18px; margin: 4px 0 0 1px; }
.ytc { flex: none; width: 6px; writing-mode: vertical-rl; font-size: 6px; line-height: 6px; color: #777; padding-top: 4px; }
.fund-name { flex: 1; display: flex; flex-direction: column; padding: 0 1px 0 3px; background: #2c2c2c; color: #fff; font-family: "Liberation Serif", serif; font-size: 13px; line-height: 11px; }
.mgr { align-self: flex-end; }
.fund button { display: block; width: 100%; height: 20px; border: 1px solid #eee; border-right-color: #555; border-bottom-color: #555; font-family: "Noto Sans CJK JP", sans-serif; font-size: 12px; line-height: 16px; }
.pip { position: absolute; border: 1px solid #8a8577; background: #fff; color: #1010c0; font-family: "Liberation Sans", sans-serif; font-weight: 700; font-size: 10px; line-height: 13px; }
.h1-a { left: 44.6%; top: 58.2%; }
.h1-b { left: 56.7%; top: 70.3%; }
.m15-a { left: 68.200%; top: 66%; }
.m15-b { left: 79.500%; top: 71.4%; }
.prices { position: relative; display: flex; flex-direction: column; justify-content: space-between; padding-top: 6px; margin-bottom: -2px; line-height: 9px; }
.prices span { display: flex; align-items: center; gap: 2px; }
.prices span::before { content: ""; width: 2px; height: 1px; background: #111; }
.now { position: absolute; left: 0; top: 49%; width: 37px; padding-left: 4px; background: #000; color: #fff; font-weight: 400; line-height: 10px; }
.now-m15 { top: 54.500%; }
.times { position: relative; display: flex; line-height: 9px; white-space: nowrap; }
.times span { flex: 0 0 10.45%; width: 0; }
.times span::before { content: ""; display: block; width: 1px; height: 3px; margin-left: 1px; background: #111; }
.mark { position: absolute; top: 3px; padding: 0 3px; background: #0808d8; color: #fff; font-weight: 400; line-height: 10px; }
.mark-h1 { left: 40.800%; }
.mark-m15 { left: 50.500%; }
.mark-h1, .mark-m15 { margin-left: 0; }
.mark-h1 { left: 40.800%; }

.tabs { flex: 0 0 19px; display: flex; align-items: flex-start; padding-left: 5px; border-top: 1px solid #111; border-bottom: 2px solid #f8f8f8; font-size: 10px; line-height: 14px; }
.tab { height: 15px; padding: 0 10px; border-right: 1px solid #777; color: #777; }
.tab.on { height: 16px; border: 1px solid #111; border-top: 0; background: #fff; color: #111; }
.tab-arrows { margin-left: auto; display: flex; gap: 13px; padding: 5px 7px 0 0; }
.tab-arrows svg { width: 4px; height: 6px; }

.status { flex: 0 0 19px; display: flex; padding: 1px 0; font-size: 9px; line-height: 16px; white-space: nowrap; border-bottom: 1px solid #b5c9c9; }
.cell { border-right: 1px solid #999; padding-left: 4px; }
.help { flex: 1; padding-left: 2px; }
.profile { width: 102px; }
.c-a { width: 89px; }
.c-b { width: 61px; }
.c-c { width: 59px; }
.conn { display: flex; align-items: center; gap: 4px; width: 99px; border: 0; }
.bars { width: 20px; height: 12px; }
.resize { width: 12px; height: 12px; align-self: flex-end; }

.taskbar { flex: 0 0 41px; display: flex; align-items: center; background: linear-gradient(90deg, #d6efe6, #ccf2f2 45%, #d0f1f3); padding-right: 9px; }
.weather { width: 200px; display: flex; align-items: center; gap: 8px; padding-left: 15px; line-height: 13px; }
.weather p, .clock { display: flex; flex-direction: column; }
.weather span { font-size: 9px; }
.w-icon { width: 22px; height: 24px; }
.cond { color: #444; }
.start { width: 24px; display: grid; place-items: center; }
.start svg { width: 20px; height: 20px; }
.search { width: 191px; height: 27px; margin-left: 10px; display: flex; align-items: center; gap: 8px; padding-left: 9px; border-radius: 14px; background: #effafa; border: 1px solid #d8ecec; }
.search svg { width: 14px; height: 14px; }
.search input { width: 100px; padding: 0; border: 0; outline: 0; background: none; font: inherit; font-size: 12px; }
.search input::placeholder { color: #555; }
.apps { flex: 0 0 581px; margin-left: 2px; display: grid; grid-template-columns: repeat(15, 1fr); height: 100%; align-items: center; justify-items: center; }
.apps svg { width: 22px; height: 22px; }
.apps button { position: relative; }
.current { width: 33px; height: 33px; border-radius: 4px; background: #e9fafa; display: grid; place-items: center; }
.current::after, .open::after { content: ""; position: absolute; left: 50%; bottom: -1px; width: 14px; height: 2px; margin-left: -7px; border-radius: 1px; background: #1d7480; }
.open::after { width: 4px; margin-left: -2px; bottom: -6px; background: #6d8589; }
.zm { display: block; width: 21px; height: 22px; border-radius: 50%; background: #0b5cff; color: #fff; font: 700 10px/20px "Open Sans", sans-serif; text-align: center; }
.kabu { display: block; width: 21px; height: 22px; border-radius: 4px; background: #fff; border-bottom: 5px solid #18d3e8; overflow: hidden; }
.kabu i { display: block; width: 13px; height: 4px; margin: 1px auto 0; background: #222; }
.kabu b { display: block; color: #18c8e0; font: 700 10px/12px "Noto Sans CJK JP", sans-serif; text-align: center; }
.clock { margin-left: auto; text-align: right; font-size: 10px; line-height: 14px; color: #222; }

/* The time row spans the plot and the price column */
.times { grid-column: 1 / -1; }
.times span { flex-basis: 9.720%; }
```
FILE: charts.js
```js
// Each candle: colour letter, then high, body top, body bottom, low.
const H1 = `r276 286 291 292|r281 289 293 300|b283 292 299 300|r291 292 298 301|b286 297 300 332|r290 298 300 302|r293 299 301 328|r286 299 301 307|r288 299 300 305|r298 299 318 328|b287 293 318 336|r271 293 325 330|r310 323 349 349|b334 346 348 362|r340 346 359 385|r334 359 366 385|r362 365 386 436|b301 307 386 401|b270 273 307 310|r270 272 292 295|r283 291 293 303|r289 292 300 305|r298 300 311 314|b290 293 310 312|r290 292 308 312|r285 291 309 312|r290 300 309 313|r298 300 313 330|r308 313 338 342|r331 338 383 396|r368 382 448 456|b421 442 448 461|b407 408 443 453|r400 408 427 432|r424 428 457 485|b416 434 457 462|b374 386 435 456|b362 381 388 393|r377 381 402 404|b326 345 402 404|b326 327 345 364|r325 327 391 395|b369 372 390 401|b353 368 373 380|r365 367 370 380|b356 359 369 370|b345 355 361 363|b350 351 356 361|r346 351 360 362|b357 360 361 372|g354 360 361 367|b354 359 361 365|r353 358 369 380|b338 362 369 372|b357 358 363 373|b340 347 358 360|b320 331 347 350|r326 331 349 352|b328 345 348 370|b283 287 346 350|b265 269 287 308|b263 268 270 292|r257 268 270 275|b235 248 270 272|r207 247 249 270|r242 249 269 286|b252 260 269 280|b236 242 260 268|r239 242 244 259|b237 240 245 254|r238 239 244 250|b238 240 245 257|r240 242 258 259|r250 257 259 266|b242 246 258 265|b231 233 246 248|b212 225 233 250|r215 225 252 265|b243 250 253 267|b244 246 250 252|r242 246 258 261|r256 258 275 276|r272 274 287 300|r276 287 394 420|b343 366 393 442|b336 343 366 383|r341 343 362 373|r360 362 395 405|r383 395 413 427|b370 389 413 416|b383 386 389 411|r369 386 399 407|r387 399 400 403|b390 398 400 406|b391 397 399 405|b385 389 398 400|b380 387 390 392|r388 390 394 406|b382 383 396 398|b371 373 384 386|r372 373 415 445|b384 400 415 430|b350 360 400 403|r352 359 361 365|b342 344 362 363|r337 343 371 376|r355 370 375 385|b358 371 375 403|r359 371 373 395|r369 373 387 390|r375 386 388 404|r385 387 395 407|b363 390 395 397|b361 380 391 393|b324 341 381 382|r333 341 357 370|r357 357 397 399|r389 397 404 421|b386 390 404 410|b377 379 391 393|r370 379 396 398|r385 395 396 402|b375 377 396 400|b350 353 377 379|b332 345 353 360|r340 345 354 366|b315 318 354 355|r315 318 325 335|b309 311 325 328|b290 298 312 315|r294 298 305 313|b269 273 304 305|r269 273 336 344|b301 304 335 337|r298 305 326 328|r320 325 331 336|r324 329 349 365|b338 348 350 355|b328 334 350 360|r335 337 353 358|r352 353 362 366|b354 356 362 367|b351 353 356 360|b344 346 353 354|b337 343 346 355`;
const M15 = `b378 385 395 400|b380 384 394 397|b375 378 386 391|b370 373 382 384|r368 373 381 386|b366 369 380 383|b360 365 372 375|b352 357 366 368|b345 349 358 364|r344 350 353 358|b345 349 352 357|r345 349 356 360|r350 355 360 372|b345 348 359 361|r344 355 366 375|r358 365 378 385|r370 378 385 395|b372 378 387 390|b362 366 380 383|b345 352 368 372|b318 330 355 359|b297 301 332 336|r291 303 318 320|b312 317 319 325|b277 280 318 320|r280 280 282 297|r271 281 303 305|b282 283 303 308|r272 283 288 290|b270 280 287 289|r273 280 284 289|b268 273 283 288|r270 273 280 284|r278 279 282 287|b262 265 282 287|b241 252 266 272|r245 250 262 270|b244 256 262 267|b209 211 256 257|r210 211 232 235|r226 231 249 250|r248 249 260 267|r252 259 262 273|r260 262 288 292|r280 287 292 301|b277 280 292 296|r265 279 281 293|b268 277 279 291|r272 277 287 290|b265 270 286 289|b252 254 271 278|b243 248 256 260|b241 246 248 250|r243 246 248 251|r247 248 253 254|r250 252 258 260|r255 257 259 261|b252 253 260 261|g250 253 254 258|b247 248 254 255|b243 246 250 252|b243 245 247 250|r244 245 253 254|r252 252 259 261|r257 258 261 263|b249 252 261 263|b245 247 253 254|b243 245 249 250|r244 245 249 250|r244 246 251 253|r245 247 251 254|r247 249 253 256|r250 252 257 259|r253 255 268 271|b262 265 269 277|r260 265 267 274|r263 266 268 272|r256 265 268 270|b246 248 267 271|b242 246 250 251|r244 246 248 250|r245 248 251 253|b242 244 250 252|r239 243 247 249|r242 245 248 251|b236 238 249 250|b215 217 240 241|r213 217 220 227|r219 219 228 229|r219 227 229 231|b219 223 231 234|r222 223 250 261|r243 249 262 265|b258 262 266 268|r259 261 271 280|b260 262 271 272|b250 259 263 264|b255 257 261 264|g252 258 259 262|b256 258 259 261|r256 258 262 267|b252 253 264 266|r249 254 262 263|r260 262 277 282|b270 273 277 279|b263 267 274 275|r262 267 277 281|r273 275 279 280|r277 278 282 284|r275 281 287 288|r283 287 300 312|r292 299 302 307|r293 300 312 314|b298 300 312 317|b289 299 302 304|r299 299 327 336|r322 326 344 360|r341 342 430 457|r417 430 471 472|b413 424 471 484|b401 402 424 433|b393 394 408 418|r378 393 395 398|r389 394 402 404|b391 395 402 415|b368 368 397 398|r368 368 389 393|r382 388 393 402|b379 389 394 400|b381 389 391 396|b380 384 390 398|r381 384 396 405|r392 395 420 422|r405 419 430 440|r415 428 438 446|r436 438 450 459|r440 449 451 456|b441 450 451 467|b417 420 450 451|b402 408 421 424|r400 408 418 425|r415 415 424 433|r419 423 440 448|b423 428 441 444|b420 424 429 430|b415 419 425 428|b398 409 420 427|r407 409 425 427|r422 424 431 435|r427 430 435 441|b429 431 435 438|b417 424 431 434|r421 423 431 433`;
const COLORS = { r: '#dc0008', b: '#0a0acc', g: '#22cc33' };

const path = (pts, color, width) =>
  `<polyline points="${pts}" fill="none" stroke="${color}" stroke-width="${width}" stroke-linejoin="round"/>`;
const line = (x1, y1, x2, y2, color, width, dash = '') =>
  `<line x1="${x1}" y1="${y1}" x2="${x2}" y2="${y2}" stroke="${color}" stroke-width="${width}" stroke-dasharray="${dash}"/>`;

function candles(data, x0) {
  return data.split('|').map((c, i) => {
    const [hi, top, bot, lo] = c.slice(1).split(' ').map(Number);
    const x = Math.round(x0 + i * 3.518);
    const col = COLORS[c[0]];
    return `<rect x="${x}" y="${hi}" width="1" height="${lo - hi}" fill="${col}" opacity=".8"/>` +
      `<rect x="${x - 1}" y="${top}" width="3" height="${Math.max(1, bot - top)}" fill="${col}"/>`;
  }).join('');
}

document.getElementById('h1').innerHTML =
  line(13, 343.5, 551, 343.5, '#8a9398', 1) +
  line(239, 207, 551, 207, '#0000b8', 2) + line(133, 485, 551, 485, '#0000a0', 2) +
  line(267, 266, 551, 266, '#18dede', 2) + line(130, 398, 551, 398, '#18e6ea', 2) +
  line(275, 246, 299, 246, '#30d030', 2) +
  line(284.5, 119, 284.5, 566, '#2424c8', 1, '3 2') +
  candles(H1, 13) +
  path('13,204 22,226 38,272 50,295 62,316 72,316 80,314 107,317 114,322 122,335 135,352 142,353 150,363 160,370 167,378 182,389 193,383 207,365 223,355 232,343 240,328 285,253 293,250 300,251 313,270 327,300 345,337 362,370 370,385 390,385 407,382 420,377 433,379 453,377 463,370 477,353 492,344 500,335 513,331 520,331', '#ffb2bd', 1.5) +
  path('13,191 40,207 60,222 90,236 117,251 138,269 163,278 200,298 222,308 248,321 270,327 283,322 300,320 333,329 350,331 377,339 393,342 420,337 443,339 467,337 480,333 497,333 507,335 519,340', '#f0a010', 2.6) +
  path('165,117 185,121 230,125 275,129.5 300,130 345,136 390,141 420,146 450,151 480,153.5 520,158', '#dc0008', 3) +
  line(283, 252, 307, 397, '#dc0008', 1, '3 1') + line(286, 252, 307, 397, '#dc0008', 1) +
  '<path d="M280 253l3-3 3 3-3 3z" fill="#dc0008"/><path d="M304 394l4 4-2 1zM309 400l4 4M313 400l-4 4" fill="#f5c020" stroke="#f5c020" stroke-width="1.5"/>';

document.getElementById('m15').innerHTML =
  line(611, 367.5, 1149, 367.5, '#8a9398', 1) +
  line(746, 208, 1149, 208, '#0000b8', 2) + line(611, 534, 1149, 534, '#0000a0', 2) +
  line(858, 278, 1149, 278, '#18dede', 2) + line(611, 432, 1149, 432, '#18dede', 2) +
  line(905, 254, 1023, 254, '#30d030', 2) +
  line(938.5, 119, 938.5, 566, '#2424c8', 1, '3 2') +
  candles(M15, 612) +
  path('611,398 630,389 645,378 660,374 670,375 685,366 706,339 727,320 743,290 750,277 763,269 783,266 807,260 817,262 830,262 840,259 857,251 877,253 898,254 907,253 927,247 940,246 962,246 973,249 997,268 1013,278 1023,293 1033,317 1043,337 1057,360 1075,382 1090,411 1100,408 1117,413 1130,420 1143,429', '#ffb2bd', 1.5) +
  path('611,400 630,394 670,388 710,375 750,358 790,339 817,327 847,313 872,300 883,296 905,286 925,275 950,267 970,259 990,257 1017,259 1033,270 1070,287 1097,303 1145,332', '#18e6ea', 2) +
  path('611,315 682,325 713,329 787,339 850,347 893,349 907,348 940,343 973,341 1023,342 1077,345 1147,352', '#f0a010', 2.6) +
  line(937, 263, 1022, 428, '#dc0008', 1, '3 1') + line(940, 263, 1024, 428, '#dc0008', 1) +
  '<path d="M933 263l3-3 3 3-3 3z" fill="#dc0008"/><path d="M1022 430l5-3v6zM1029 436l4-3v5z" fill="#f5c020"/>';
```
